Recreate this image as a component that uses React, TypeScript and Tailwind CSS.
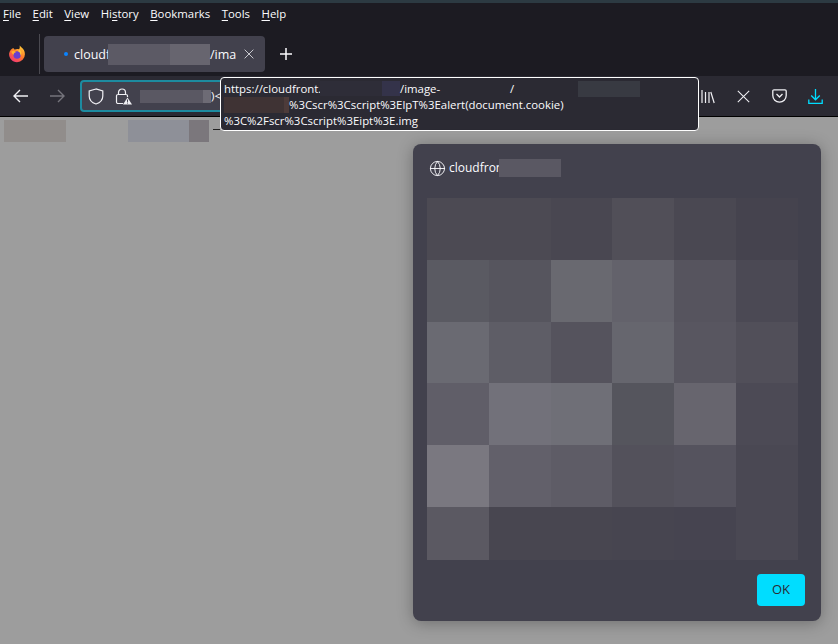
import { Globe } from 'lucide-react';

const menus = [
  { pre: '', key: 'F', post: 'ile' },
  { pre: '', key: 'E', post: 'dit' },
  { pre: '', key: 'V', post: 'iew' },
  { pre: 'Hi', key: 's', post: 'tory' },
  { pre: '', key: 'B', post: 'ookmarks' },
  { pre: '', key: 'T', post: 'ools' },
  { pre: '', key: 'H', post: 'elp' },
];

const cells = [
  'bg-[#4c4a53]', 'bg-[#4c4a53]', 'bg-[#494751]', 'bg-[#514f58]', 'bg-[#4a4852]', 'bg-[#45434e]',
  'bg-[#5a5a62]', 'bg-[#56555e]', 'bg-[#696970]', 'bg-[#63626b]', 'bg-[#56545e]', 'bg-[#4b4954]',
  'bg-[#6a6a72]', 'bg-[#5e5d66]', 'bg-[#55535d]', 'bg-[#66666e]', 'bg-[#585660]', 'bg-[#514f59]',
  'bg-[#605e68]', 'bg-[#72717a]', 'bg-[#6f6f77]', 'bg-[#55555d]', 'bg-[#67656e]', 'bg-[#4c4a55]',
  'bg-[#7a7880]', 'bg-[#62606a]', 'bg-[#5e5c66]', 'bg-[#53515b]', 'bg-[#55535e]', 'bg-[#4a4853]',
  'bg-[#5b5962]', 'bg-[#484650]', 'bg-[#484650]', 'bg-[#474550]', 'bg-[#464450]', 'bg-[#4a4853]',
];

const FirefoxLogo = () => (
  <svg width="18" height="18" viewBox="0 0 18 18">
    <defs>
      <linearGradient id="ff" x1="0.8" y1="0" x2="0.2" y2="1">
        <stop offset="0" stopColor="#ffd23a" />
        <stop offset="0.5" stopColor="#ff7a2a" />
        <stop offset="1" stopColor="#f0307a" />
      </linearGradient>
    </defs>
    <path d="M9 17.2A7.9 7.9 0 0 0 16.9 9.2C16.9 6.4 15.6 4 13.6 2.6L11.6.4C12 2.4 11.8 3.4 10.8 4.2 9.6 3.8 8 3.9 7 4.6 6.4 4.3 5.6 3.6 5.3 2.9 3.8 3.6 1.6 5 1.1 8.6 .7 13.4 4.4 17.2 9 17.2Z" fill="url(#ff)" />
    <circle cx="9.1" cy="10" r="3.7" fill="#6a3fd0" />
    <path d="M3.3 6.6C5 5.6 7 6 8.2 7.2 6.8 7 5.8 8.2 5.6 9.8 4.6 9.4 3.6 8.2 3.3 6.6Z" fill="#ffb02e" />
    <path d="M11.6 4.4C13.6 6 14 8.8 12.6 10.8 12.6 8.6 11.6 6.8 9.8 6 10.6 5.8 11.2 5.2 11.6 4.4Z" fill="#ffc83a" />
  </svg>
);

const Close = ({ size, className }: { size: number; className?: string }) => (
  <svg width={size} height={size} viewBox="0 0 16 16" className={className} fill="none" stroke="currentColor" strokeWidth="1.3">
    <path d="M1 1l14 14M15 1L1 15" />
  </svg>
);

export default function App() {
  return (
    <div className="relative flex h-[644px] w-[838px] flex-col overflow-hidden bg-[#9d9d9d] font-['Open_Sans',sans-serif]">
      {/* menu bar */}
      <div className="h-[3px] bg-[#2c3a42]" />
      <div className="flex h-[21px] items-center gap-[11.5px] bg-[#1c1b22] pl-[3px] text-[11.4px] leading-none text-[#fbfbfe]">
        {menus.map((m) => (
          <span key={m.key + m.post}>
            {m.pre}
            <span className="underline underline-offset-2">{m.key}</span>
            {m.post}
          </span>
        ))}
      </div>

      {/* tabs */}
      <div className="flex h-[52px] items-center bg-[#1c1b22] pt-[8px]">
        <div className="flex w-[34px] justify-center">
          <FirefoxLogo />
        </div>
        <div className="ml-[5px] h-[40px] w-px bg-[#4a4950]" />
        <div className="ml-[4px] flex h-[36px] w-[221px] items-center rounded bg-[#42414d] pl-[20px] text-[12.5px] text-[#fbfbfe]">
          <span className="h-[4px] w-[4px] rounded-full bg-[#0a84ff]" />
          <span className="ml-[6px] w-[34px] pt-[2px]">cloudf</span>
          <span className="h-[21px] w-[62px] bg-[#5c5a65]" />
          <span className="h-[21px] w-[40px] bg-[#67656f]" />
          <span className="w-[25px] whitespace-nowrap pt-[2px]">/ima</span>
          <Close size={10} className="ml-[9px] text-[#e8e8ec]" />
        </div>
        <svg width="12" height="12" viewBox="0 0 12 12" className="ml-[15px]" stroke="#fbfbfe" strokeWidth="1.5">
          <path d="M6 0v12M0 6h12" />
        </svg>
      </div>

      {/* toolbar */}
      <div className="flex h-[41px] items-center border-b border-black bg-[#2b2a33] text-[#fbfbfe]">
        <svg width="16" height="14" viewBox="0 0 16 14" className="ml-[13px]" fill="none" stroke="#f0f0f4" strokeWidth="1.4">
          <path d="M15 7H1.500M7 1 1 7l6 6" />
        </svg>
        <svg width="16" height="14" viewBox="0 0 16 14" className="ml-[20px]" fill="none" stroke="#75747c" strokeWidth="1.4">
          <path d="M1 7h13.500M9 1l6 6-6 6" />
        </svg>
        <div className="ml-[15px] flex h-[32px] w-[610px] items-center rounded border-2 border-[#1d8ba0] bg-[#42414d] pl-[6px] text-[11.5px]">
          <svg width="16" height="17" viewBox="0 0 16 17" fill="none" stroke="#f0f0f4" strokeWidth="1.2">
            <path d="M8 1 1.200 3v5c0 4 3 6.800 6.800 8 3.800-1.200 6.800-4 6.800-8V3Z" />
          </svg>
          <svg width="17" height="17" viewBox="0 0 17 17" className="ml-[11px]" fill="none" stroke="#f0f0f4" strokeWidth="1.2">
            <path d="M3.500 6.500V4.500a3.500 3.500 0 0 1 7 0v2M8 15.500H3a1.500 1.500 0 0 1-1.500-1.500V8A1.500 1.500 0 0 1 3 6.500h8A1.500 1.500 0 0 1 12.500 8v1" />
            <path d="M12.500 9.500 17 16.500H8Z" fill="#f0f0f4" stroke="none" />
            <path d="M12.500 11.500v2.400M12.500 14.600v.9" stroke="#42414d" strokeWidth="1" />
          </svg>
          <span className="ml-[8px] h-[13px] w-[63px] bg-[#5a5863]" />
          <span className="h-[13px] w-[8px] bg-[#6d6b75]" />
          <span className="whitespace-pre">)&lt;</span>
        </div>
        <svg width="14" height="15" viewBox="0 0 14 15" className="ml-[11px]" fill="none" stroke="#f0f0f4" strokeWidth="1.2">
          <path d="M1 1v13M4.500 3v11M8 3v11M9.800 3l3.400 11" />
        </svg>
        <Close size={13} className="ml-[22px] text-[#f0f0f4]" />
        <svg width="15" height="14" viewBox="0 0 15 14" className="ml-[22px]" fill="none" stroke="#f0f0f4" strokeWidth="1.3">
          <path d="M2 .8h11a1.200 1.200 0 0 1 1.200 1.200v4.500a6.700 6.700 0 0 1-13.400 0V2A1.200 1.200 0 0 1 2 .8Z" />
          <path d="M4.500 5 7.500 8l3-3" />
        </svg>
        <svg width="15" height="15" viewBox="0 0 15 15" className="ml-[21px]" fill="none" stroke="#00ddff" strokeWidth="1.3">
          <path d="M7.500 0v10.500M3.200 6.500l4.300 4.300 4.300-4.300M.8 10.500v3.800h13.400v-3.800" />
        </svg>
      </div>

      {/* page */}
      <div className="flex h-[22px] items-start pl-[4px] pt-[3px]">
        <span className="h-[22px] w-[62px] bg-[#918d8b]" />
        <span className="ml-[62px] h-[22px] w-[61px] bg-[#8e9098]" />
        <span className="h-[22px] w-[20px] bg-[#7b777c]" />
        <span className="ml-[4px] mt-[9px] h-px w-[7px] bg-[#222]" />
      </div>

      {/* url tooltip */}
      <div className="absolute left-[220px] top-[77px] h-[54px] w-[479px] rounded border border-white bg-[#2b2a33] px-[3px] pt-[2px] text-[11.4px] leading-[16px] text-[#fbfbfe] whitespace-nowrap">
        <div className="flex h-[17px] items-center">
          <span className="w-[96px]">https://cloudfront.</span>
          <span className="h-[15px] w-[62px] bg-[#2e2d38]" />
          <span className="h-[15px] w-[18px] bg-[#34334a]" />
          <span className="w-[43px]">/image-</span>
          <span className="w-[67px]" />
          <span>/</span>
          <span className="ml-[64px] h-[16px] w-[62px] bg-[#383a42]" />
        </div>
        <div className="flex items-center">
          <span className="h-[16px] w-[60px] bg-[#3f3334]" />
          <span className="h-[16px] w-[5px] bg-[#4d3b3a]" />
          <span>%3Cscr%3Cscript%3ElpT%3Ealert(document.cookie)</span>
        </div>
        <div>%3C%2Fscr%3Cscript%3Eipt%3E.img</div>
      </div>

      {/* dialog */}
      <div className="absolute left-[413px] top-[144px] flex h-[477px] w-[408px] flex-col rounded-lg bg-[#42414d] shadow-[0_2px_16px_rgba(0,0,0,0.3)]">
        <div className="ml-[16px] mt-[14px] flex h-[20px] items-center text-[12px] text-[#fbfbfe]">
          <Globe size={17} strokeWidth={1.3} />
          <span className="ml-[3px] w-[50px] whitespace-nowrap">cloudfron</span>
          <span className="h-[18px] w-[62px] bg-[#5a5863]" />
        </div>
        <div className="ml-[14px] mt-[20px] grid grid-cols-[62px_62px_61px_62px_62px_62px] grid-rows-[62px_62px_61px_62px_62px_53px]">
          {cells.map((c, i) => (
            <div key={i} className={c} />
          ))}
        </div>
        <div className="mr-[16px] mt-[14px] flex justify-end">
          <button className="h-[32px] w-[48px] rounded bg-[#00ddff] text-[13px] text-[#2b2a33]">OK</button>
        </div>
      </div>
    </div>
  );
}
